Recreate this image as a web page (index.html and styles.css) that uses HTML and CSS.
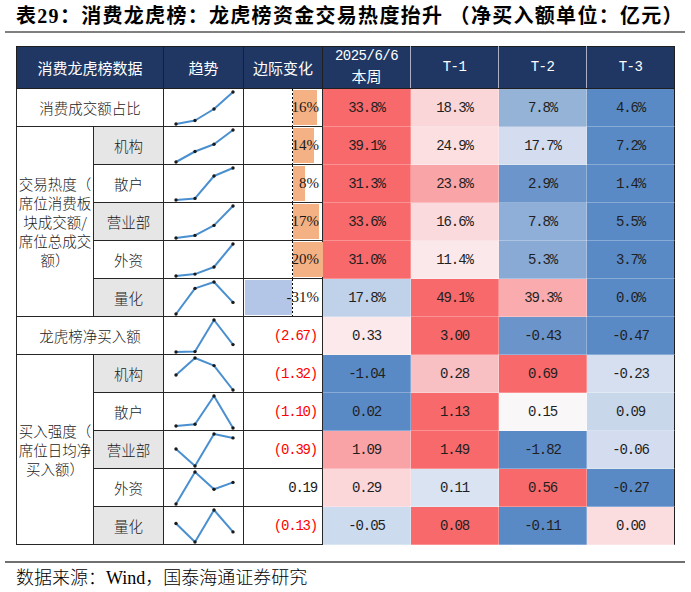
FILE: index.html
```html
<!DOCTYPE html>
<html lang="zh-CN">
<head>
<meta charset="utf-8">
<title>表29</title>
<link rel="stylesheet" href="styles.css">
</head>
<body>
<div class="page">
  <h1 class="title">表29：消费龙虎榜：龙虎榜资金交易热度抬升 （净买入额单位：亿元）</h1>
  <div class="rule"></div>
  <table class="grid">
    <colgroup>
      <col class="c-grp"><col class="c-sub"><col class="c-trend"><col class="c-bar">
      <col class="c-heat"><col class="c-heat"><col class="c-heat"><col class="c-heat">
    </colgroup>
    <thead>
      <tr class="head">
        <th colspan="2">消费龙虎榜数据</th>
        <th>趋势</th>
        <th>边际变化</th>
        <th class="hh num">2025/6/6<br><span class="cjk">本周</span></th>
        <th class="hh num">T-1</th>
        <th class="hh num">T-2</th>
        <th class="hh num last">T-3</th>
      </tr>
    </thead>
    <tbody>
      <tr>
        <td colspan="2" class="lab">消费成交额占比</td>
        <td class="spark"><svg viewBox="0 0 80 37" width="80" height="37"><polyline points="12,35 31,31.5 50,20 69,3"/><circle cx="12" cy="35" r="1.7"/><circle cx="31" cy="31.5" r="1.7"/><circle cx="50" cy="20" r="1.7"/><circle cx="69" cy="3" r="1.7"/></svg></td>
        <td class="barc"><div class="bar-box"><span class="bar pos" style="width:24px"></span><span class="axis"></span><span class="bar-val">16%</span></div></td>
        <td class="heat" style="background:#f8696b">33.8%</td>
        <td class="heat" style="background:#fad6d9">18.3%</td>
        <td class="heat" style="background:#95b3d7">7.8%</td>
        <td class="heat last" style="background:#5a8ac6">4.6%</td>
      </tr>
      <tr>
        <td rowspan="5" class="grp">交易热度（<br>席位消费板<br>块成交额/<br>席位总成交<br>额）</td>
        <td class="sub shade">机构</td>
        <td class="spark"><svg viewBox="0 0 80 37" width="80" height="37"><polyline points="12,35 31,24.5 50,17.2 69,3"/><circle cx="12" cy="35" r="1.7"/><circle cx="31" cy="24.5" r="1.7"/><circle cx="50" cy="17.2" r="1.7"/><circle cx="69" cy="3" r="1.7"/></svg></td>
        <td class="barc"><div class="bar-box"><span class="bar pos" style="width:21px"></span><span class="axis"></span><span class="bar-val">14%</span></div></td>
        <td class="heat" style="background:#f8696b">39.1%</td>
        <td class="heat" style="background:#fbdfe1">24.9%</td>
        <td class="heat" style="background:#d3ddef">17.7%</td>
        <td class="heat last" style="background:#5a8ac6">7.2%</td>
      </tr>
      <tr>
        <td class="sub">散户</td>
        <td class="spark"><svg viewBox="0 0 80 37" width="80" height="37"><polyline points="12,35 31,33.4 50,11 69,3"/><circle cx="12" cy="35" r="1.7"/><circle cx="31" cy="33.4" r="1.7"/><circle cx="50" cy="11" r="1.7"/><circle cx="69" cy="3" r="1.7"/></svg></td>
        <td class="barc"><div class="bar-box"><span class="bar pos" style="width:12px"></span><span class="axis"></span><span class="bar-val">8%</span></div></td>
        <td class="heat" style="background:#f8696b">31.3%</td>
        <td class="heat" style="background:#f9a5a8">23.8%</td>
        <td class="heat" style="background:#6c95cb">2.9%</td>
        <td class="heat last" style="background:#5a8ac6">1.4%</td>
      </tr>
      <tr>
        <td class="sub shade">营业部</td>
        <td class="spark"><svg viewBox="0 0 80 37" width="80" height="37"><polyline points="12,35 31,32.4 50,22.4 69,3"/><circle cx="12" cy="35" r="1.7"/><circle cx="31" cy="32.4" r="1.7"/><circle cx="50" cy="22.4" r="1.7"/><circle cx="69" cy="3" r="1.7"/></svg></td>
        <td class="barc"><div class="bar-box"><span class="bar pos" style="width:25.7px"></span><span class="axis"></span><span class="bar-val">17%</span></div></td>
        <td class="heat" style="background:#f8696b">33.6%</td>
        <td class="heat" style="background:#fbdadd">16.6%</td>
        <td class="heat" style="background:#8faed8">7.8%</td>
        <td class="heat last" style="background:#5a8ac6">5.5%</td>
      </tr>
      <tr>
        <td class="sub">外资</td>
        <td class="spark"><svg viewBox="0 0 80 37" width="80" height="37"><polyline points="12,35 31,33.1 50,26 69,3"/><circle cx="12" cy="35" r="1.7"/><circle cx="31" cy="33.1" r="1.7"/><circle cx="50" cy="26" r="1.7"/><circle cx="69" cy="3" r="1.7"/></svg></td>
        <td class="barc"><div class="bar-box"><span class="bar pos" style="width:30px"></span><span class="axis"></span><span class="bar-val">20%</span></div></td>
        <td class="heat" style="background:#f8696b">31.0%</td>
        <td class="heat" style="background:#fbe8ea">11.4%</td>
        <td class="heat" style="background:#8aaad6">5.3%</td>
        <td class="heat last" style="background:#5a8ac6">3.7%</td>
      </tr>
      <tr>
        <td class="sub shade">量化</td>
        <td class="spark"><svg viewBox="0 0 80 37" width="80" height="37"><polyline points="12,35 31,9.4 50,3 69,23.4"/><circle cx="12" cy="35" r="1.7"/><circle cx="31" cy="9.4" r="1.7"/><circle cx="50" cy="3" r="1.7"/><circle cx="69" cy="23.4" r="1.7"/></svg></td>
        <td class="barc"><div class="bar-box"><span class="bar neg" style="left:1px;width:47px"></span><span class="axis"></span><span class="bar-val">-31%</span></div></td>
        <td class="heat" style="background:#c0d1ea">17.8%</td>
        <td class="heat" style="background:#f8696b">49.1%</td>
        <td class="heat" style="background:#f9abad">39.3%</td>
        <td class="heat last" style="background:#5a8ac6">0.0%</td>
      </tr>
      <tr>
        <td colspan="2" class="lab">龙虎榜净买入额</td>
        <td class="spark"><svg viewBox="0 0 80 37" width="80" height="37"><polyline points="12,35 31,34.6 50,3 69,27.6"/><circle cx="12" cy="35" r="1.7"/><circle cx="31" cy="34.6" r="1.7"/><circle cx="50" cy="3" r="1.7"/><circle cx="69" cy="27.6" r="1.7"/></svg></td>
        <td class="val red">(2.67)</td>
        <td class="heat" style="background:#fbe9eb">0.33</td>
        <td class="heat" style="background:#f8696b">3.00</td>
        <td class="heat" style="background:#6a94ca">-0.43</td>
        <td class="heat last" style="background:#5a8ac6">-0.47</td>
      </tr>
      <tr>
        <td rowspan="5" class="grp">买入强度（<br>席位日均净<br>买入额）</td>
        <td class="sub shade">机构</td>
        <td class="spark"><svg viewBox="0 0 80 37" width="80" height="37"><polyline points="12,20 31,3 50,10.6 69,35"/><circle cx="12" cy="20" r="1.7"/><circle cx="31" cy="3" r="1.7"/><circle cx="50" cy="10.6" r="1.7"/><circle cx="69" cy="35" r="1.7"/></svg></td>
        <td class="val red">(1.32)</td>
        <td class="heat" style="background:#5a8ac6">-1.04</td>
        <td class="heat" style="background:#f9c0c3">0.28</td>
        <td class="heat" style="background:#f8696b">0.69</td>
        <td class="heat last" style="background:#d5dfef">-0.23</td>
      </tr>
      <tr>
        <td class="sub">散户</td>
        <td class="spark"><svg viewBox="0 0 80 37" width="80" height="37"><polyline points="12,33 31,31.3 50,3 69,35"/><circle cx="12" cy="33" r="1.7"/><circle cx="31" cy="31.3" r="1.7"/><circle cx="50" cy="3" r="1.7"/><circle cx="69" cy="35" r="1.7"/></svg></td>
        <td class="val red">(1.10)</td>
        <td class="heat" style="background:#5a8ac6">0.02</td>
        <td class="heat" style="background:#f8696b">1.13</td>
        <td class="heat" style="background:#faf7f9">0.15</td>
        <td class="heat last" style="background:#c9d7eb">0.09</td>
      </tr>
      <tr>
        <td class="sub shade">营业部</td>
        <td class="spark"><svg viewBox="0 0 80 37" width="80" height="37"><polyline points="12,18 31,35 50,3 69,6.9"/><circle cx="12" cy="18" r="1.7"/><circle cx="31" cy="35" r="1.7"/><circle cx="50" cy="3" r="1.7"/><circle cx="69" cy="6.9" r="1.7"/></svg></td>
        <td class="val red">(0.39)</td>
        <td class="heat" style="background:#f9a3a6">1.09</td>
        <td class="heat" style="background:#f8696b">1.49</td>
        <td class="heat" style="background:#5a8ac6">-1.82</td>
        <td class="heat last" style="background:#d3ddef">-0.06</td>
      </tr>
      <tr>
        <td class="sub">外资</td>
        <td class="spark"><svg viewBox="0 0 80 37" width="80" height="37"><polyline points="12,35 31,3 50,20.3 69,13.4"/><circle cx="12" cy="35" r="1.7"/><circle cx="31" cy="3" r="1.7"/><circle cx="50" cy="20.3" r="1.7"/><circle cx="69" cy="13.4" r="1.7"/></svg></td>
        <td class="val">0.19</td>
        <td class="heat" style="background:#fbd7da">0.29</td>
        <td class="heat" style="background:#dae3f2">0.11</td>
        <td class="heat" style="background:#f8696b">0.56</td>
        <td class="heat last" style="background:#5a8ac6">-0.27</td>
      </tr>
      <tr>
        <td class="sub shade">量化</td>
        <td class="spark"><svg viewBox="0 0 80 37" width="80" height="37"><polyline points="12,16.5 31,35 50,3 69,24.9"/><circle cx="12" cy="16.5" r="1.7"/><circle cx="31" cy="35" r="1.7"/><circle cx="50" cy="3" r="1.7"/><circle cx="69" cy="24.9" r="1.7"/></svg></td>
        <td class="val red">(0.13)</td>
        <td class="heat" style="background:#cddbee">-0.05</td>
        <td class="heat" style="background:#f8696b">0.08</td>
        <td class="heat" style="background:#5a8ac6">-0.11</td>
        <td class="heat last" style="background:#fbdcdf">0.00</td>
      </tr>
    </tbody>
  </table>
  <div class="rule foot-rule"></div>
  <p class="source">数据来源：Wind，国泰海通证券研究</p>
</div>
</body>
</html>
```

FILE: styles.css
```css
html, body {
  margin: 0;
  padding: 0;
  background: #ffffff;
}

.page {
  width: 691px;
  height: 592px;
  overflow: hidden;
  font-family: "Liberation Serif", "Noto Sans CJK SC", serif;
  color: #1a1a1a;
}

.title {
  margin: 0;
  padding: 1px 0 0 16px;
  height: 30px;
  line-height: 30px;
  font-size: 20px;
  font-weight: 700;
  letter-spacing: 1.3px;
  color: #000;
  white-space: nowrap;
}

.rule {
  margin: 0 6px 0 5px;
  height: 2px;
  background: #808080;
}

.grid {
  margin: 13px 0 0 16px;
  border-collapse: collapse;
  table-layout: fixed;
  width: 659px;
}

.c-grp { width: 77px; }
.c-sub { width: 70px; }
.c-trend { width: 80px; }
.c-bar { width: 79px; }
.c-heat { width: 88px; }

.head th {
  height: 41px;
  padding: 0;
  background: #203764;
  color: #ffffff;
  font-family: "Noto Sans CJK SC", sans-serif;
  font-weight: 400;
  font-size: 15px;
  border: 1px solid #1f1f1f;
}

.head th.hh {
  border-right: 1px solid #a9b1c2;
  line-height: 19px;
}

.head th.hh.last {
  border-right: 1px solid #1f1f1f;
}

.head th.num {
  font-family: "Liberation Mono", monospace;
  font-size: 14px;
  letter-spacing: -0.5px;
}

.head .cjk {
  font-family: "Noto Sans CJK SC", sans-serif;
  font-size: 15px;
  letter-spacing: 0;
}

tbody tr {
  height: 37px;
}

tbody td {
  padding: 0;
  height: 37px;
  border: 1px solid #262626;
  text-align: center;
  vertical-align: middle;
  font-family: "Noto Sans CJK SC", sans-serif;
  font-weight: 300;
  font-size: 14.5px;
}

.grp {
  line-height: 19px;
}

.sub.shade {
  background: #e6e6e6;
}

.spark svg {
  display: block;
}

.spark polyline {
  fill: none;
  stroke: #4a8fcf;
  stroke-width: 2;
  stroke-linejoin: round;
}

.spark circle {
  fill: #1a1a1a;
}

.bar-box {
  position: relative;
  height: 37px;
  display: flex;
  align-items: center;
  justify-content: flex-end;
  padding-right: 3px;
}

.bar {
  position: absolute;
  top: 1px;
  bottom: 1px;
}

.bar.pos {
  left: 49px;
  background: #f4b183;
}

.bar.neg {
  background: #b4c6e7;
}

.axis {
  position: absolute;
  left: 48px;
  top: 0;
  bottom: 0;
  width: 1px;
  background: repeating-linear-gradient(to bottom, #000 0 2px, transparent 2px 4px);
}

.bar-val {
  position: relative;
  font-family: "Liberation Serif", serif;
  font-size: 15px;
  font-weight: 400;
  color: #1a1a1a;
}

td.val {
  text-align: right;
  padding-right: 5px;
  font-family: "Liberation Mono", monospace;
  font-size: 14px;
  letter-spacing: -1.2px;
  font-weight: 400;
}

td.val.red {
  color: #ff0000;
}

td.heat {
  border: 1px solid rgba(255, 255, 255, 0.28);
  font-family: "Liberation Mono", monospace;
  font-size: 14px;
  letter-spacing: -1.1px;
  font-weight: 400;
  color: #1f1f1f;
}

td.heat.last {
  border-right: 1px solid #1f1f1f;
}

.foot-rule {
  margin-top: 16px;
  height: 1.5px;
  background: #707070;
}

.source {
  margin: 4px 0 0 16px;
  font-size: 18px;
  line-height: 22px;
  font-weight: 300;
  color: #000;
  font-family: "Liberation Serif", "Noto Sans CJK SC", serif;
}
```
